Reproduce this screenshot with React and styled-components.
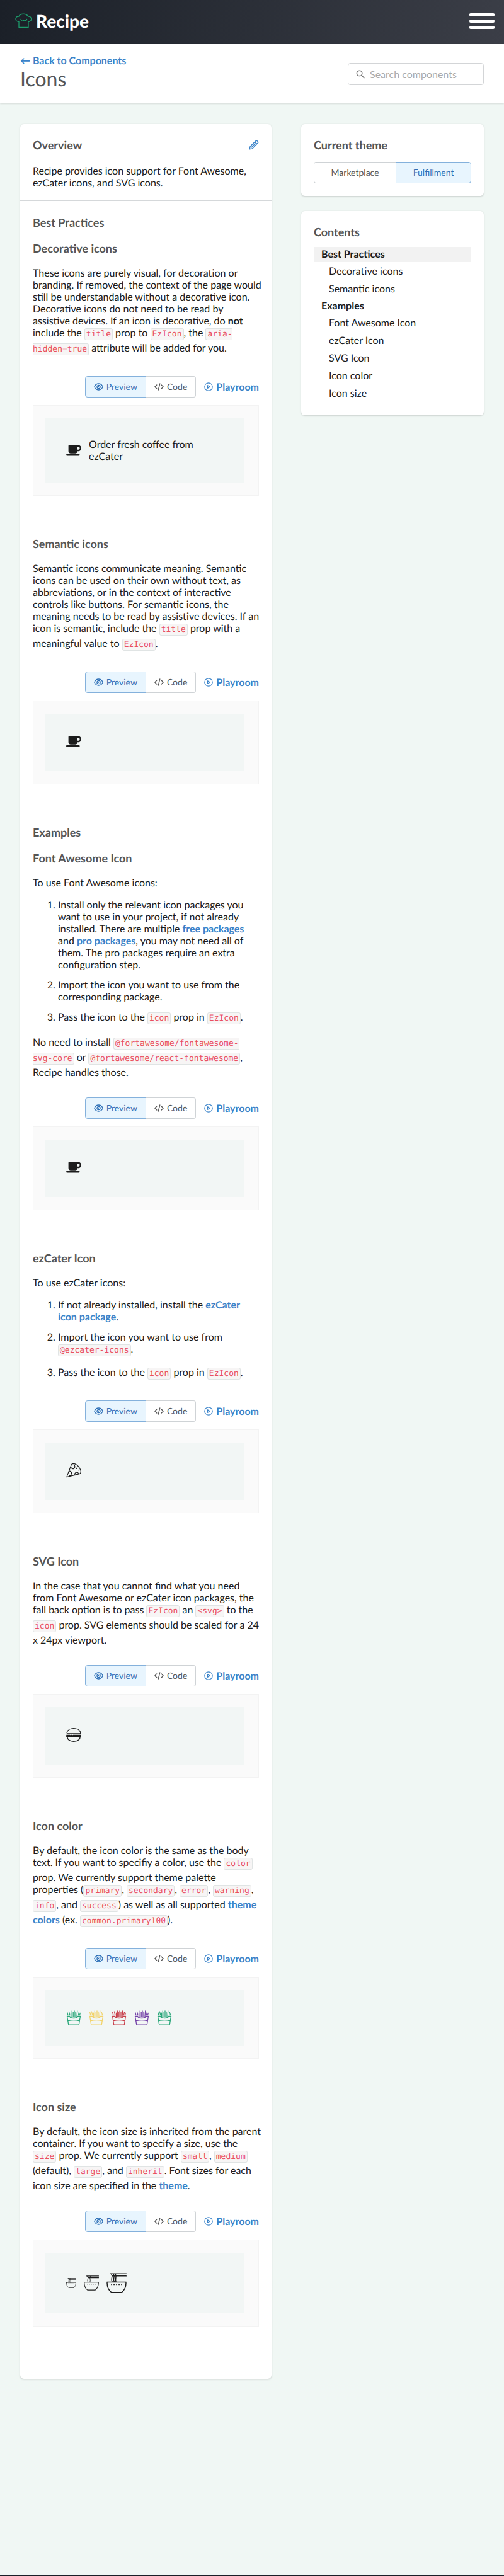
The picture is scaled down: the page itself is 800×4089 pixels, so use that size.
import React from 'react';
import styled, { createGlobalStyle, css } from 'styled-components';

const GlobalStyle = createGlobalStyle`
  *, *::before, *::after { box-sizing: border-box; }
  body {
    margin: 0;
    background: #f0f7f4;
    color: #1c1c1c;
    font-family: Lato, "Open Sans", sans-serif;
    font-size: 16px;
    line-height: 19px;
    text-rendering: geometricPrecision;
  }
`;

const Page = styled.div`
  display: flex;
  flex-direction: column;
  min-height: 100vh;
`;

const TopBar = styled.header`
  display: flex;
  align-items: center;
  justify-content: space-between;
  height: 70px;
  padding: 0 15px 4px 24px;
  background: linear-gradient(100deg, #1b2028 0%, #3b3e47 100%);
`;

const Brand = styled.a`
  display: flex;
  align-items: center;
  gap: 6px;
  color: #fff;
  font-size: 28px;
  font-weight: 900;
  line-height: 32px;
  text-decoration: none;
`;

const MenuButton = styled.button`
  display: flex;
  flex-direction: column;
  gap: 5px;
  width: 40px;
  padding: 0;
  border: 0;
  background: none;
`;

const MenuLine = styled.span`
  height: 5px;
  border-radius: 2px;
  background: #fff;
`;

const PageHeader = styled.div`
  display: flex;
  align-items: flex-start;
  justify-content: space-between;
  padding: 17px 32px 20px;
  background: #fff;
  box-shadow: 0 1px 3px rgba(0, 0, 0, 0.2);
`;

const Link = styled.a`
  color: #3a83c9;
  font-weight: 700;
  text-decoration: none;
`;

const BackLink = styled(Link)`
  display: block;
  line-height: 20px;
`;

const Title = styled.h1`
  margin: 0;
  color: #555;
  font-size: 32px;
  font-weight: 400;
  line-height: 36px;
`;

const SearchField = styled.label`
  display: flex;
  align-items: center;
  gap: 8px;
  width: 216px;
  height: 35px;
  margin-top: 13px;
  padding: 0 12px;
  border: 1px solid #d3d5d7;
  border-radius: 4px;
  color: #777;
`;

const SearchInput = styled.input`
  flex: 1;
  min-width: 0;
  padding: 0;
  border: 0;
  outline: 0;
  background: none;
  color: #1c1c1c;
  font: inherit;
  &::placeholder { color: #ababab; opacity: 1; }
`;

const Main = styled.main`
  display: grid;
  grid-template-columns: minmax(0, 1fr) 290px;
  align-items: start;
  gap: 47px;
  flex: 1;
  padding: 34px 32px 64px;
`;

const Card = styled.section`
  border-radius: 6px;
  background: #fff;
  box-shadow: 0 1px 3px rgba(0, 0, 0, 0.18);
`;

const Overview = styled.div`
  padding: 22px 20px 18px;
  border-bottom: 1px solid #d5d8da;
`;

const OverviewHead = styled.div`
  display: flex;
  align-items: center;
  justify-content: space-between;
  margin-bottom: 21px;
  a { display: flex; color: #3a83c9; }
`;

const Heading = styled.h2`
  margin: 0;
  color: #555;
  font-size: 18px;
  font-weight: 700;
  line-height: 22px;
`;

const Article = styled.div`
  padding: 23px 20px 83px;
`;

const GroupHeading = styled(Heading)`
  margin-bottom: 19px;
`;

const Section = styled.section`
  & + &, & + h2 { margin-top: 65px; }
`;

const Text = styled.p`
  margin: 0 -4px 0 0;
  h3 + & { margin-top: 19px; }
`;

const Steps = styled.ol`
  display: flex;
  flex-direction: column;
  gap: 13px;
  margin: 16px 0;
  padding-left: 40px;
`;

const Code = styled.code`
  padding: 1px 2px;
  border: 1px solid #e0e4e4;
  border-radius: 3px;
  background: #f7f5f5;
  color: #ea4f5f;
  font-family: "DejaVu Sans Mono", "Liberation Mono", monospace;
  font-size: 13px;
  line-height: 24px;
`;

const NoBreak = styled.span`
  white-space: nowrap;
`;

const Toolbar = styled.div`
  display: flex;
  align-items: center;
  justify-content: flex-end;
  gap: 13px;
  margin: 30px 0 12px;
`;

const Toggle = styled.div`
  display: flex;
`;

const ToggleButton = styled.button`
  display: flex;
  flex: ${(p) => (p.$wide ? '1 1 auto' : 'none')};
  align-items: center;
  justify-content: center;
  gap: 5px;
  height: 34px;
  padding: 0 13px;
  border: 1px solid #cfd3d6;
  background: #fff;
  color: #555;
  font: 400 14px/18px Lato, "Open Sans", sans-serif;
  text-rendering: inherit;
  &:first-child { border-radius: 4px 0 0 4px; border-right-width: 0; }
  &:last-child { border-radius: 0 4px 4px 0; border-left-width: 0; }
  ${(p) => p.$active && css`
    &&& { border: 1px solid #84b1dc; }
    background: #e8f5fe;
    color: #2e70b7;
  `}
`;

const PlayLink = styled(Link)`
  display: flex;
  align-items: center;
  gap: 5px;
`;

const Frame = styled.div`
  padding: 20px 22px 20px 19px;
  border: 1px solid #f3f3f3;
  background: #fafafa;
`;

const Stage = styled.div`
  display: flex;
  align-items: center;
  gap: 12px;
  padding: 32px 33px;
  padding-bottom: ${(p) => (p.$inline ? 35 : 32)}px;
  background: #f2f6f5;
  svg { flex: none; }
`;

const Sidebar = styled.aside`
  display: flex;
  flex-direction: column;
  gap: 24px;
`;

const ThemeCard = styled(Card)`
  display: flex;
  flex-direction: column;
  gap: 16px;
  padding: 22px 20px 20px;
`;

const ContentsCard = styled(Card)`
  padding: 22px 20px 22px;
`;

const ContentsList = styled.ul`
  display: flex;
  flex-direction: column;
  gap: ${(p) => (p.$nested ? 4 : 3)}px;
  margin: ${(p) => (p.$nested ? '3px 0 0' : '13px 0 0')};
  padding: 0;
  list-style: none;
`;

const ContentsLink = styled.a`
  display: block;
  padding: 2px 12px 3px ${(p) => (p.$nested ? 24 : 12)}px;
  background: ${(p) => (p.$current ? '#f2f2f2' : 'transparent')};
  color: #1c1c1c;
  font-weight: ${(p) => (p.$nested ? 400 : 700)};
  text-decoration: none;
`;

const Footer = styled.footer`
  height: 1px;
  background: #1b2028;
`;

const strokeProps = {
  fill: 'none', stroke: 'currentColor', strokeLinecap: 'round', strokeLinejoin: 'round', 'aria-hidden': true,
};

const HatIcon = () => (
  <svg width="27" height="24" viewBox="0 0 27 24" {...strokeProps} stroke="#1d9b6b" strokeWidth="1.3">
    <path d="M6 22.500V13.500C-1 13-.5 4.500 6 5C8 0 18 0 20.500 5c6.500-.5 7 8 .5 8.500v9zM9 9.500c.3 3.300 4 3.500 5 1.200M14 10.700c2 1.600 4.500.8 4.600-1.200" />
  </svg>
);

const SearchIcon = () => (
  <svg width="14" height="14" viewBox="0 0 14 14" {...strokeProps} strokeWidth="1.5">
    <circle cx="5.6" cy="5.4" r="4.2" /><path d="M8.8 8.6l4 4" />
  </svg>
);

const PencilIcon = () => (
  <svg width="16" height="16" viewBox="0 0 16 16" {...strokeProps} strokeWidth="1.4">
    <path d="M1.2 14.8l.9-4.2L10.900 1.800a1.600 1.600 0 0 1 2.300 0l1 1a1.600 1.600 0 0 1 0 2.300L5.400 13.900zM9.400 3.300l3.300 3.300M4 12l6-6" />
  </svg>
);

const EyeIcon = () => (
  <svg width="15" height="12" viewBox="0 0 15 12" {...strokeProps} strokeWidth="1.3">
    <path d="M.8 6C2.2 2.8 4.7 1 7.5 1s5.300 1.800 6.700 5c-1.400 3.200-3.900 5-6.700 5S2.200 9.200.8 6z" />
    <circle cx="7.5" cy="6" r="2.6" /><path d="M6.700 6.200c.7.200 1-.2.9-.9" />
  </svg>
);

const CodeIcon = () => (
  <svg width="15" height="12" viewBox="0 0 15 12" {...strokeProps} strokeWidth="1.3">
    <path d="M3.8 3L.8 6l3 3M11.200 3l3 3-3 3M8.800 1L6.200 11" />
  </svg>
);

const PlayIcon = () => (
  <svg width="14" height="14" viewBox="0 0 14 14" {...strokeProps} strokeWidth="1.2">
    <circle cx="7" cy="7" r="6.2" /><path d="M5.600 4.700v4.600L9.300 7z" />
  </svg>
);

const CoffeeIcon = () => (
  <svg width="24" height="24" viewBox="0 -64 640 640" fill="currentColor" aria-hidden="true">
    <path d="M96 64c0-17.700 14.300-32 32-32h384c70.700 0 128 57.300 128 128s-57.300 128-128 128h-32c0 53-43 96-96 96H192c-53 0-96-43-96-96V64zm384 160h32c35.300 0 64-28.700 64-64s-28.700-64-64-64h-32v128zM32 416h512c17.700 0 32 14.300 32 32s-14.300 32-32 32H32c-17.700 0-32-14.300-32-32s14.300-32 32-32z" />
  </svg>
);

const PizzaIcon = () => (
  <svg width="24" height="24" viewBox="0 0 24 24" {...strokeProps} strokeWidth="1.2">
    <path d="M.8 22.600L8.200 3.300C9.200.8 13 .6 17 3.600s6.800 8.200 6.300 11.200c-.2 1.400-1 2.400-2.300 2.900zM8.300 3.400c-3 4.600 3.200 8.800 5.200 4.400.8-1.800 0-3.800-1.600-4.600M4.600 13.200c4.600-.8 5.500 5.300.6 7.700M14 19.600c-1.800-4.400 4.400-6.200 6-2M16.500 8.300h1v1h-1zM20.300 12.500h.2" />
  </svg>
);

const BurgerIcon = () => (
  <svg width="24" height="24" viewBox="0 0 24 24" {...strokeProps} strokeWidth="1.3">
    <path d="M3 10c-1.800 0-2-1.200-1.600-2.500C2.500 4 7 1.700 12 1.700S21.500 4 22.600 7.500C23 8.800 22.800 10 21 10zM.7 12.300h5l1.400 1 1.400-1 1.500 1 1.500-1h11.800M.7 14.500h22.600M2 14.700c-.6 4 3 7.600 10 7.600s10.600-3.600 10-7.600" />
  </svg>
);

const FriesIcon = ({ color }) => (
  <svg width="24" height="24" viewBox="0 0 24 24" {...strokeProps} stroke={color} strokeWidth="1.3">
    <path d="M1.500 9.500l2.300 13.700h16.400L22.500 9.500h-4c-.5 2.200-2.600 3-6.500 3s-6-.8-6.500-3zM3.300 16.500c5.500-1.200 12-1.200 17.400 0M2.800 7.500L1.700 3.500M5.700 7.500L4.500 2.200M7.500 10V4.200M9.300 10V1M11.200 10.500V3M13 10.500V1M15 10.300V2.500M17 9.500l.7-8.500M19.500 7.500l1-4.500M21.500 7.500l.8-3" />
  </svg>
);

const NoodleIcon = ({ size }) => (
  <svg width={size} height={size} viewBox="0 0 24 24" {...strokeProps} strokeWidth="1.1">
    <path d="M.6 10.800h22.800M4.500.9h19M6.500 3.600h17M.8 10.800c-.3 5.400 1.600 9.500 5 12.300h12.400c3.400-2.800 5.300-6.900 5-12.300M5.500 1c3 3-1 6 1.300 9.500M8 1c3 3-1 6 1.300 9.500M10.500 1c2 3-.5 6 .8 9.500" />
    <path d="M6 13.800h.1M9 13.800h.1M12 13.800h.1M15 13.800h.1M18 13.800h.1" strokeWidth="1.3" />
  </svg>
);

function Example({ children, inline }) {
  return (
    <>
      <Toolbar>
        <Toggle>
          <ToggleButton type="button" $active aria-pressed="true"><EyeIcon />Preview</ToggleButton>
          <ToggleButton type="button" aria-pressed="false"><CodeIcon />Code</ToggleButton>
        </Toggle>
        <PlayLink href="#playroom"><PlayIcon />Playroom</PlayLink>
      </Toolbar>
      <Frame><Stage $inline={inline}>{children}</Stage></Frame>
    </>
  );
}

const practices = ['Decorative icons', 'Semantic icons'];
const examples = ['Font Awesome Icon', 'ezCater Icon', 'SVG Icon', 'Icon color', 'Icon size'];
const slug = (name) => name.toLowerCase().replace(/ /g, '-');
const friesColors = ['#2ba77a', '#f2d36b', '#c8404c', '#7442a8', '#2ba77a'];

function ContentsGroup({ name, items, current }) {
  return (
    <li>
      <ContentsLink href={`#${slug(name)}`} $current={current}>{name}</ContentsLink>
      <ContentsList $nested>
        {items.map((item) => (
          <li key={item}><ContentsLink $nested href={`#${slug(item)}`}>{item}</ContentsLink></li>
        ))}
      </ContentsList>
    </li>
  );
}

export default function App() {
  return (
    <Page>
      <GlobalStyle />
      <TopBar>
        <Brand href="#home"><HatIcon />Recipe</Brand>
        <MenuButton type="button" aria-label="Menu"><MenuLine /><MenuLine /><MenuLine /></MenuButton>
      </TopBar>
      <PageHeader>
        <div>
          <BackLink href="#components">← Back to Components</BackLink>
          <Title>Icons</Title>
        </div>
        <SearchField>
          <SearchIcon />
          <SearchInput type="text" placeholder="Search components" aria-label="Search components" />
        </SearchField>
      </PageHeader>

      <Main>
        <Card>
          <Overview>
            <OverviewHead>
              <Heading>Overview</Heading>
              <a href="#edit" aria-label="Edit this page"><PencilIcon /></a>
            </OverviewHead>
            <Text>Recipe provides icon support for Font Awesome, ezCater icons, and SVG icons.</Text>
          </Overview>

          <Article>
            <GroupHeading id="best-practices">Best Practices</GroupHeading>
            <Section id="decorative-icons">
              <Heading as="h3">Decorative icons</Heading>
              <Text>
                These icons are purely visual, for decoration or branding. If removed, the context of the
                page would still be understandable without a decorative icon. Decorative icons do not need
                to be read by assistive devices. If an icon is decorative, do <strong>not</strong> include
                the <Code>title</Code> prop to <Code>EzIcon</Code>, the <Code>aria-hidden=true</Code>{' '}
                attribute will be added for you.
              </Text>
              <Example><CoffeeIcon /><span>Order fresh coffee from ezCater</span></Example>
            </Section>

            <Section id="semantic-icons">
              <Heading as="h3">Semantic icons</Heading>
              <Text>
                Semantic icons communicate meaning. Semantic icons can be used on their own without text,
                as abbreviations, or in the context of interactive controls like buttons. For semantic
                icons, the meaning needs to be read by assistive devices. If an icon is semantic, include
                the <Code>title</Code> prop with a meaningful value to <Code>EzIcon</Code>.
              </Text>
              <Example inline><CoffeeIcon /></Example>
            </Section>

            <GroupHeading id="examples">Examples</GroupHeading>
            <Section id="font-awesome-icon">
              <Heading as="h3">Font Awesome Icon</Heading>
              <Text>To use Font Awesome icons:</Text>
              <Steps>
                <li>
                  Install only the relevant icon packages you want to use in your project, if not already
                  installed. There are multiple <Link href="#free">free packages</Link> and{' '}
                  <Link href="#pro">pro packages</Link>, you may not need all of them. The pro packages
                  require an extra configuration step.
                </li>
                <li>Import the icon you want to use from the corresponding package.</li>
                <li>Pass the icon to the <Code>icon</Code> prop in <Code>EzIcon</Code>.</li>
              </Steps>
              <Text>
                No need to install <Code>@fortawesome/fontawesome-<NoBreak>svg-core</NoBreak></Code> or{' '}
                <Code>@fortawesome/react-fontawesome</Code>, Recipe handles those.
              </Text>
              <Example inline><CoffeeIcon /></Example>
            </Section>

            <Section id="ezcater-icon">
              <Heading as="h3">ezCater Icon</Heading>
              <Text>To use ezCater icons:</Text>
              <Steps>
                <li>If not already installed, install the <Link href="#package">ezCater icon package</Link>.</li>
                <li>Import the icon you want to use from <Code>@ezcater-icons</Code>.</li>
                <li>Pass the icon to the <Code>icon</Code> prop in <Code>EzIcon</Code>.</li>
              </Steps>
              <Example inline><PizzaIcon /></Example>
            </Section>

            <Section id="svg-icon">
              <Heading as="h3">SVG Icon</Heading>
              <Text>
                In the case that you cannot find what you need from Font Awesome or ezCater icon packages,
                the fall back option is to pass <Code>EzIcon</Code> an <Code>&lt;svg&gt;</Code> to
                the <Code>icon</Code> prop. SVG elements should be scaled for a 24 x 24px viewport.
              </Text>
              <Example inline><BurgerIcon /></Example>
            </Section>

            <Section id="icon-color">
              <Heading as="h3">Icon color</Heading>
              <Text>
                By default, the icon color is the same as the body text. If you want to specifiy a color,
                use the <Code>color</Code> prop. We currently support theme palette properties
                (<Code>primary</Code>, <Code>secondary</Code>, <Code>error</Code>, <Code>warning</Code>,{' '}
                <Code>info</Code>, and <Code>success</Code>) as well as all
                supported <Link href="#colors">theme colors</Link> (ex. <Code>common.primary100</Code>).
              </Text>
              <Example>{friesColors.map((color, i) => <FriesIcon key={i} color={color} />)}</Example>
            </Section>

            <Section id="icon-size">
              <Heading as="h3">Icon size</Heading>
              <Text>
                By default, the icon size is inherited from the parent container. If you want to specify a
                size, use the <NoBreak><Code>size</Code> prop.</NoBreak> We currently
                support <Code>small</Code>, <Code>medium</Code> (default), <Code>large</Code>,
                and <Code>inherit</Code>. Font sizes for each icon size are specified in
                the <Link href="#theme">theme</Link>.
              </Text>
              <Example><NoodleIcon size={16} /><NoodleIcon size={24} /><NoodleIcon size={32} /></Example>
            </Section>
          </Article>
        </Card>

        <Sidebar>
          <ThemeCard>
            <Heading>Current theme</Heading>
            <Toggle>
              <ToggleButton type="button" $wide aria-pressed="false">Marketplace</ToggleButton>
              <ToggleButton type="button" $wide $active aria-pressed="true">Fulfillment</ToggleButton>
            </Toggle>
          </ThemeCard>
          <ContentsCard>
            <Heading>Contents</Heading>
            <ContentsList>
              <ContentsGroup name="Best Practices" items={practices} current />
              <ContentsGroup name="Examples" items={examples} />
            </ContentsList>
          </ContentsCard>
        </Sidebar>
      </Main>
      <Footer />
    </Page>
  );
}
